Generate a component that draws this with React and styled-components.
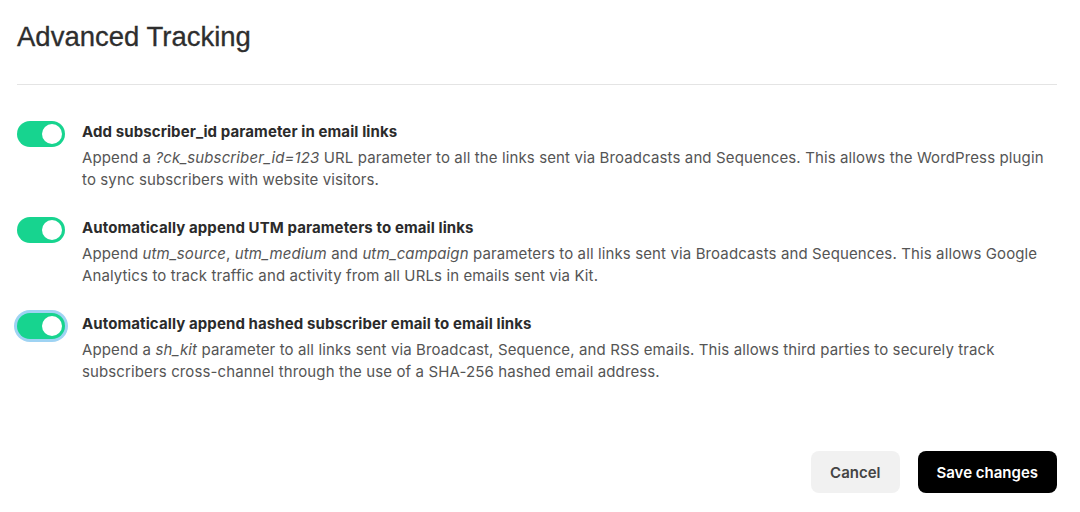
import styled, { createGlobalStyle } from "styled-components";

const GlobalStyle = createGlobalStyle`
  body {
    margin: 0;
    background: #fff;
    font-family: Inter, "Noto Sans", sans-serif;
  }
`;

const Page = styled.div`
  display: flex;
  flex-direction: column;
  padding: 0 23px 0 17px;
  height: 512px;
  box-sizing: border-box;
`;

const Header = styled.div`
  height: 84px;
  border-bottom: 1px solid #e4e4e4;
  display: flex;
  align-items: flex-start;
`;

const Title = styled.h1`
  margin: 21px 0 0;
  font-family: "Liberation Sans", Arial, sans-serif;
  font-size: 27.5px;
  font-weight: 400;
  color: #2e2e2e;
  -webkit-text-stroke: 0.3px #2e2e2e;
`;

const Settings = styled.div`
  display: flex;
  flex-direction: column;
  gap: 26px;
  padding-top: 36px;
`;

const Row = styled.div`
  display: flex;
  gap: 17px;
  align-items: flex-start;
`;

const Switch = styled.button`
  flex: none;
  width: 48px;
  height: 26px;
  padding: 3px;
  border: none;
  border-radius: 13px;
  background: ${(p) => (p.$on ? "#17d48f" : "#ccc")};
  display: flex;
  justify-content: ${(p) => (p.$on ? "flex-end" : "flex-start")};
  cursor: pointer;
  box-shadow: ${(p) => (p.$focused ? "0 0 0 3px #9fd3f3" : "none")};

  &::after {
    content: "";
    width: 20px;
    height: 20px;
    border-radius: 50%;
    background: #fff;
  }
`;

const Text = styled.div`
  display: flex;
  flex-direction: column;
`;

const Label = styled.div`
  font-size: 15px;
  font-weight: 700;
  color: #2b2b2b;
  line-height: 22px;
  letter-spacing: 0.1px;
  margin-bottom: 4px;
`;

const Desc = styled.p`
  margin: 0;
  font-size: 15px;
  line-height: 22px;
  letter-spacing: 0.12px;
  color: #555;
  max-width: 975px;

  em {
    font-style: italic;
  }
`;

const Footer = styled.div`
  margin-top: auto;
  margin-bottom: 19px;
  display: flex;
  justify-content: flex-end;
  gap: 18px;
`;

const Button = styled.button`
  height: 42px;
  padding: 0 19px;
  border: none;
  border-radius: 8px;
  font-family: Inter, sans-serif;
  font-size: 15px;
  font-weight: 600;
  cursor: pointer;
  background: ${(p) => (p.$primary ? "#000" : "#f1f1f1")};
  color: ${(p) => (p.$primary ? "#fff" : "#444")};
`;

const items = [
  {
    label: "Add subscriber_id parameter in email links",
    desc: (
      <>
        Append a <em>?ck_subscriber_id=123</em> URL parameter to all the links
        sent via Broadcasts and Sequences. This allows the WordPress plugin to
        sync subscribers with website visitors.
      </>
    ),
  },
  {
    label: "Automatically append UTM parameters to email links",
    desc: (
      <>
        Append <em>utm_source</em>, <em>utm_medium</em> and{" "}
        <em>utm_campaign</em> parameters to all links sent via Broadcasts and
        Sequences. This allows Google Analytics to track traffic and activity
        from all URLs in emails sent via Kit.
      </>
    ),
  },
  {
    label: "Automatically append hashed subscriber email to email links",
    desc: (
      <>
        Append a <em>sh_kit</em> parameter to all links sent via Broadcast,
        Sequence, and RSS emails. This allows third parties to securely track
        subscribers cross-channel through the use of a SHA-256 hashed email
        address.
      </>
    ),
    focused: true,
  },
];

export default function App() {
  return (
    <>
      <GlobalStyle />
      <Page>
        <Header>
          <Title>Advanced Tracking</Title>
        </Header>
        <Settings>
          {items.map((item) => (
            <Row key={item.label}>
              <Switch $on $focused={item.focused} aria-label={item.label} />
              <Text>
                <Label>{item.label}</Label>
                <Desc>{item.desc}</Desc>
              </Text>
            </Row>
          ))}
        </Settings>
        <Footer>
          <Button>Cancel</Button>
          <Button $primary>Save changes</Button>
        </Footer>
      </Page>
    </>
  );
}
